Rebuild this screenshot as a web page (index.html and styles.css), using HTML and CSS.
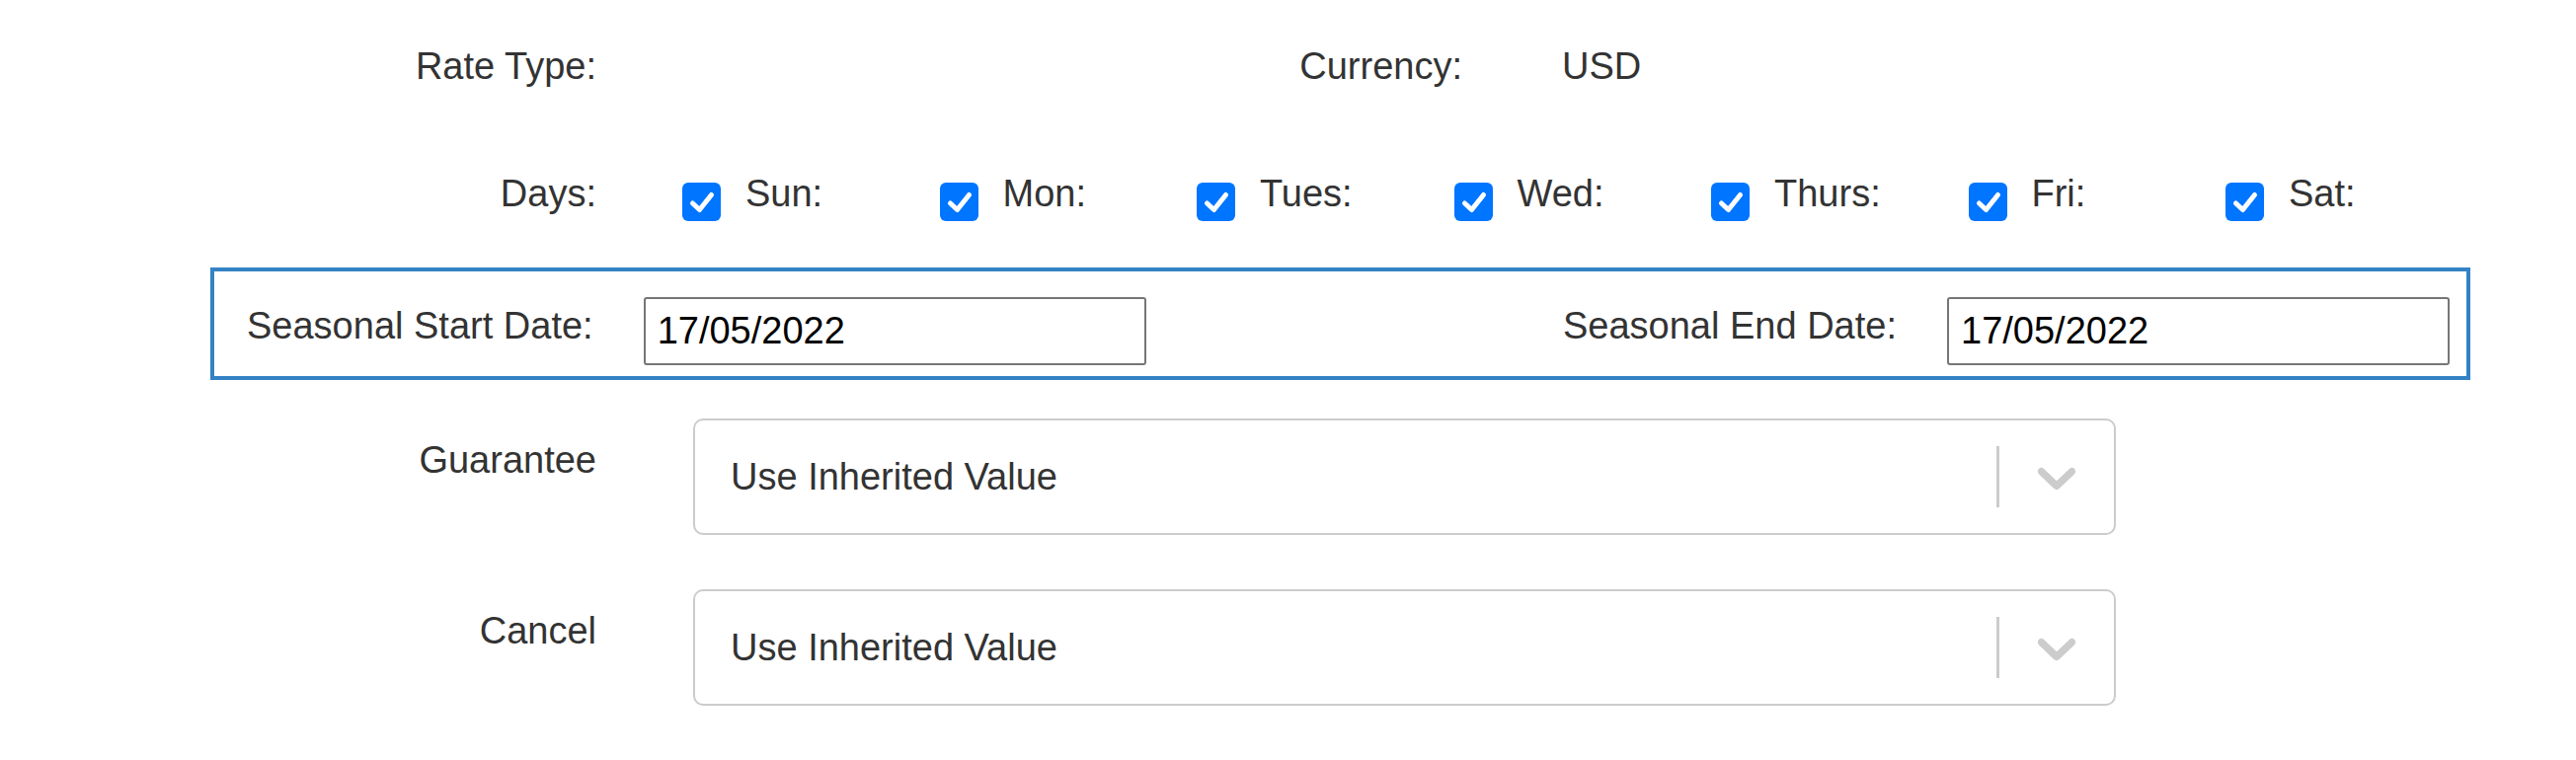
FILE: index.html
```html
<!DOCTYPE html>
<html lang="en">
<head>
<meta charset="utf-8">
<title>Rate Details</title>
<link rel="stylesheet" href="styles.css">
</head>
<body>
<form class="form">
  <div class="info-row">
    <div class="lbl">Rate Type:</div>
    <div class="val"></div>
    <div class="lbl">Currency:</div>
    <div class="val val-usd">USD</div>
  </div>

  <div class="days-row">
    <div class="lbl">Days:</div>
    <div class="days">
      <label class="day"><span class="cb"><svg viewBox="0 0 39 39" width="39" height="39"><rect width="39" height="39" rx="6" fill="#0075ff"/><polyline points="10.5,21 17.5,27.5 29.5,12.5" fill="none" stroke="#fff" stroke-width="5" stroke-linecap="round" stroke-linejoin="round"/></svg></span><span class="day-name">Sun:</span></label>
      <label class="day"><span class="cb"><svg viewBox="0 0 39 39" width="39" height="39"><rect width="39" height="39" rx="6" fill="#0075ff"/><polyline points="10.5,21 17.5,27.5 29.5,12.5" fill="none" stroke="#fff" stroke-width="5" stroke-linecap="round" stroke-linejoin="round"/></svg></span><span class="day-name">Mon:</span></label>
      <label class="day"><span class="cb"><svg viewBox="0 0 39 39" width="39" height="39"><rect width="39" height="39" rx="6" fill="#0075ff"/><polyline points="10.5,21 17.5,27.5 29.5,12.5" fill="none" stroke="#fff" stroke-width="5" stroke-linecap="round" stroke-linejoin="round"/></svg></span><span class="day-name">Tues:</span></label>
      <label class="day"><span class="cb"><svg viewBox="0 0 39 39" width="39" height="39"><rect width="39" height="39" rx="6" fill="#0075ff"/><polyline points="10.5,21 17.5,27.5 29.5,12.5" fill="none" stroke="#fff" stroke-width="5" stroke-linecap="round" stroke-linejoin="round"/></svg></span><span class="day-name">Wed:</span></label>
      <label class="day"><span class="cb"><svg viewBox="0 0 39 39" width="39" height="39"><rect width="39" height="39" rx="6" fill="#0075ff"/><polyline points="10.5,21 17.5,27.5 29.5,12.5" fill="none" stroke="#fff" stroke-width="5" stroke-linecap="round" stroke-linejoin="round"/></svg></span><span class="day-name">Thurs:</span></label>
      <label class="day"><span class="cb"><svg viewBox="0 0 39 39" width="39" height="39"><rect width="39" height="39" rx="6" fill="#0075ff"/><polyline points="10.5,21 17.5,27.5 29.5,12.5" fill="none" stroke="#fff" stroke-width="5" stroke-linecap="round" stroke-linejoin="round"/></svg></span><span class="day-name">Fri:</span></label>
      <label class="day"><span class="cb"><svg viewBox="0 0 39 39" width="39" height="39"><rect width="39" height="39" rx="6" fill="#0075ff"/><polyline points="10.5,21 17.5,27.5 29.5,12.5" fill="none" stroke="#fff" stroke-width="5" stroke-linecap="round" stroke-linejoin="round"/></svg></span><span class="day-name">Sat:</span></label>
    </div>
  </div>

  <div class="season-box">
    <div class="season-field">
      <span class="season-lbl">Seasonal Start Date:</span>
      <input class="date-input" type="text" value="17/05/2022">
    </div>
    <div class="season-field">
      <span class="season-lbl">Seasonal End Date:</span>
      <input class="date-input" type="text" value="17/05/2022">
    </div>
  </div>

  <div class="select-row">
    <div class="lbl lbl-select">Guarantee</div>
    <div class="select">
      <div class="select-value">Use Inherited Value</div>
      <div class="select-ind">
        <span class="sep"></span>
        <span class="chev"><svg viewBox="0 0 20 20" width="66" height="66"><path fill="#cccccc" d="M4.516 7.548c0.436-0.446 1.043-0.481 1.576 0l3.908 3.747 3.908-3.747c0.533-0.481 1.141-0.446 1.574 0 0.436 0.445 0.408 1.197 0 1.615-0.406 0.418-4.695 4.502-4.695 4.502-0.217 0.223-0.502 0.335-0.787 0.335s-0.57-0.112-0.789-0.335c0 0-4.287-4.084-4.695-4.502s-0.436-1.17 0-1.615z"/></svg></span>
      </div>
    </div>
  </div>

  <div class="select-row select-row-2">
    <div class="lbl lbl-select">Cancel</div>
    <div class="select">
      <div class="select-value">Use Inherited Value</div>
      <div class="select-ind">
        <span class="sep"></span>
        <span class="chev"><svg viewBox="0 0 20 20" width="66" height="66"><path fill="#cccccc" d="M4.516 7.548c0.436-0.446 1.043-0.481 1.576 0l3.908 3.747 3.908-3.747c0.533-0.481 1.141-0.446 1.574 0 0.436 0.445 0.408 1.197 0 1.615-0.406 0.418-4.695 4.502-4.695 4.502-0.217 0.223-0.502 0.335-0.787 0.335s-0.57-0.112-0.789-0.335c0 0-4.287-4.084-4.695-4.502s-0.436-1.17 0-1.615z"/></svg></span>
      </div>
    </div>
  </div>
</form>
</body>
</html>
```

FILE: styles.css
```css
* {
  box-sizing: border-box;
}

html,
body {
  margin: 0;
  padding: 0;
  background: #ffffff;
}

body {
  width: 2609px;
  height: 770px;
  overflow: hidden;
  font-family: "Liberation Sans", Arial, sans-serif;
  font-size: 38px;
  line-height: 44px;
  color: #333333;
}

.form {
  padding-top: 45px;
}

.lbl {
  text-align: right;
  white-space: nowrap;
}

/* Row 1 */
.info-row {
  display: grid;
  grid-template-columns: 604px 712px 165px auto;
  height: 44px;
}

.val-usd {
  padding-left: 101px;
}

/* Row 2 */
.days-row {
  display: grid;
  grid-template-columns: 604px auto;
  margin-top: 85px;
  height: 50px;
}

.days {
  display: flex;
  margin-left: 87px;
}

.day {
  display: flex;
  align-items: flex-start;
  width: 260.5px;
  flex: none;
}

.cb {
  display: block;
  width: 39px;
  height: 39px;
  margin-top: 11px;
  margin-right: 25px;
  flex: none;
}

.cb svg {
  display: block;
}

/* Seasonal box */
.season-box {
  display: flex;
  justify-content: space-between;
  align-items: flex-start;
  margin-top: 47px;
  margin-left: 213px;
  width: 2289px;
  height: 114px;
  border: 4px solid #3482c5;
  padding: 26px 17px 0 33px;
}

.season-field {
  display: flex;
  align-items: flex-start;
  gap: 51px;
}

.season-lbl {
  padding-top: 7px;
  white-space: nowrap;
}

.date-input {
  width: 509px;
  height: 69px;
  margin: 0;
  padding: 0 12px;
  border: 2px solid #767676;
  border-radius: 3px;
  font-family: "Liberation Sans", Arial, sans-serif;
  font-size: 38px;
  color: #000000;
  background: #ffffff;
  outline: none;
}

/* Select rows */
.select-row {
  display: grid;
  grid-template-columns: 604px 1441px;
  column-gap: 98px;
  margin-top: 39px;
}

.select-row-2 {
  margin-top: 55px;
}

.lbl-select {
  padding-top: 20px;
}

.select {
  display: flex;
  align-items: center;
  height: 118px;
  border: 2px solid #cccccc;
  border-radius: 10px;
  background: #ffffff;
}

.select-value {
  flex: 1;
  padding-left: 36px;
  color: #333333;
  white-space: nowrap;
}

.select-ind {
  display: flex;
  align-items: center;
  align-self: stretch;
}

.sep {
  display: block;
  width: 3px;
  height: 62px;
  background: #cccccc;
}

.chev {
  display: flex;
  align-items: center;
  justify-content: center;
  width: 116px;
  height: 100%;
}

.chev svg {
  display: block;
}
```
